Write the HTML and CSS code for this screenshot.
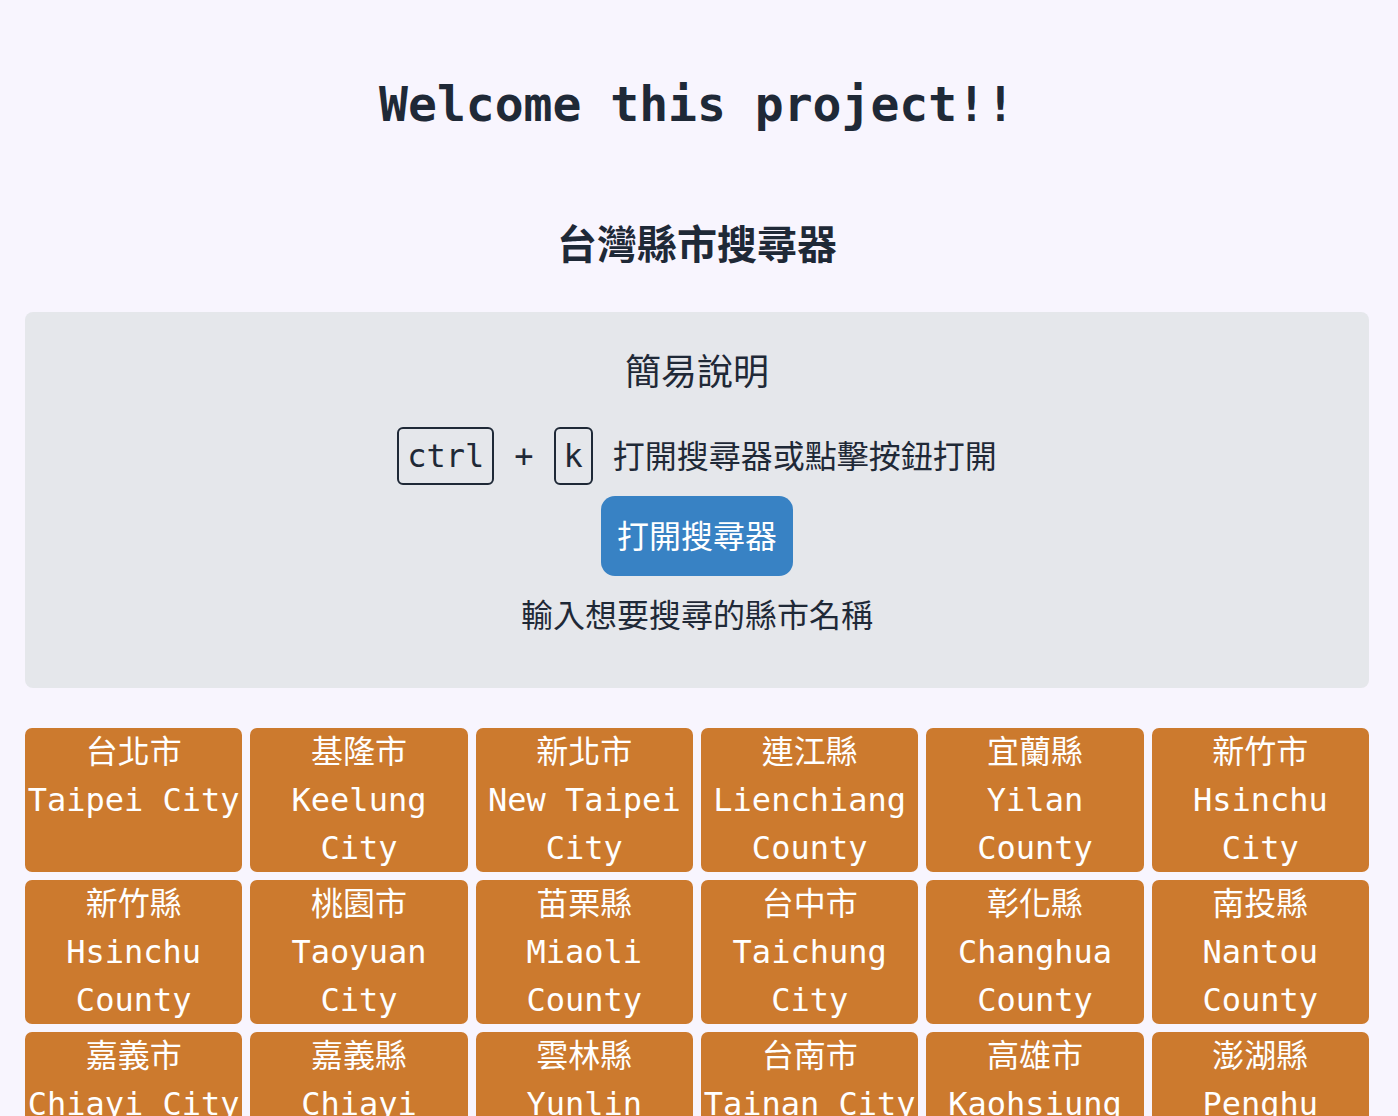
FILE: index.html
```html
<!DOCTYPE html>
<html lang="zh-Hant">
<head>
<meta charset="utf-8">
<title>台灣縣市搜尋器</title>
<link rel="stylesheet" href="styles.css">
</head>
<body>
<main class="page">
  <h1 class="title">Welcome this project!!</h1>
  <h2 class="subtitle">台灣縣市搜尋器</h2>
  <section class="guide">
    <h3 class="guide-title">簡易說明</h3>
    <div class="shortcut">
      <kbd class="key">ctrl</kbd>
      <span class="plus">+</span>
      <kbd class="key">k</kbd>
      <span class="shortcut-text">打開搜尋器或點擊按鈕打開</span>
    </div>
    <button class="open-btn" type="button">打開搜尋器</button>
    <p class="hint">輸入想要搜尋的縣市名稱</p>
  </section>
  <section class="grid">
    <div class="card"><span>台北市</span><span>Taipei City</span></div>
    <div class="card"><span>基隆市</span><span>Keelung City</span></div>
    <div class="card"><span>新北市</span><span>New Taipei City</span></div>
    <div class="card"><span>連江縣</span><span>Lienchiang County</span></div>
    <div class="card"><span>宜蘭縣</span><span>Yilan County</span></div>
    <div class="card"><span>新竹市</span><span>Hsinchu City</span></div>
    <div class="card"><span>新竹縣</span><span>Hsinchu County</span></div>
    <div class="card"><span>桃園市</span><span>Taoyuan City</span></div>
    <div class="card"><span>苗栗縣</span><span>Miaoli County</span></div>
    <div class="card"><span>台中市</span><span>Taichung City</span></div>
    <div class="card"><span>彰化縣</span><span>Changhua County</span></div>
    <div class="card"><span>南投縣</span><span>Nantou County</span></div>
    <div class="card"><span>嘉義市</span><span>Chiayi City</span></div>
    <div class="card"><span>嘉義縣</span><span>Chiayi County</span></div>
    <div class="card"><span>雲林縣</span><span>Yunlin County</span></div>
    <div class="card"><span>台南市</span><span>Tainan City</span></div>
    <div class="card"><span>高雄市</span><span>Kaohsiung City</span></div>
    <div class="card"><span>澎湖縣</span><span>Penghu County</span></div>
    <div class="card"><span>金門縣</span><span>Kinmen County</span></div>
    <div class="card"><span>屏東縣</span><span>Pingtung County</span></div>
    <div class="card"><span>台東縣</span><span>Taitung County</span></div>
    <div class="card"><span>花蓮縣</span><span>Hualien County</span></div>
  </section>
</main>
</body>
</html>
```

FILE: styles.css
```css
* { box-sizing: border-box; }

html, body {
  margin: 0;
  padding: 0;
  background: #f8f5fe;
}

body {
  font-family: "DejaVu Sans Mono", "Noto Sans CJK TC", monospace;
  color: #1f2937;
}

.page {
  padding: 0 29px 40px 25px;
  display: flex;
  flex-direction: column;
  align-items: stretch;
}

.title {
  margin: 75px 0 0;
  font-size: 48px;
  line-height: 58px;
  font-weight: 700;
  text-align: center;
}

.subtitle {
  margin: 85px 0 0;
  font-family: "Noto Sans CJK TC", sans-serif;
  font-size: 40px;
  line-height: 48px;
  font-weight: 700;
  text-align: center;
}

.guide {
  margin-top: 46px;
  background: #e5e7eb;
  border-radius: 8px;
  padding: 30px 16px 51px;
  display: flex;
  flex-direction: column;
  align-items: center;
}

.guide-title {
  margin: 0;
  font-family: "Noto Sans CJK TC", sans-serif;
  font-size: 36px;
  line-height: 54px;
  font-weight: 400;
}

.shortcut {
  margin-top: 31px;
  display: flex;
  align-items: center;
  height: 58px;
}

.key {
  font-family: "DejaVu Sans Mono", monospace;
  font-size: 32px;
  line-height: 54px;
  height: 58px;
  padding: 0 8px;
  border: 2px solid #1f2937;
  border-radius: 6px;
  display: inline-block;
}

.plus {
  font-size: 32px;
  margin: 0 20px;
}

.shortcut-text {
  margin-left: 20px;
  padding-bottom: 4px;
  font-family: "Noto Sans CJK TC", sans-serif;
  font-size: 32px;
  line-height: 48px;
}

.open-btn {
  margin-top: 11px;
  height: 80px;
  padding: 0 16px 4px;
  border: none;
  border-radius: 14px;
  background: #3882c4;
  color: #ffffff;
  font-family: "Noto Sans CJK TC", sans-serif;
  font-size: 32px;
  font-weight: 400;
  line-height: 76px;
  cursor: pointer;
}

.hint {
  margin: 13px 0 0;
  font-family: "Noto Sans CJK TC", sans-serif;
  font-size: 32px;
  line-height: 48px;
}

.grid {
  margin-top: 40px;
  display: grid;
  grid-template-columns: repeat(6, 1fr);
  gap: 8px;
}

.card {
  background: #cc7a2e;
  color: #ffffff;
  border-radius: 7px;
  min-height: 144px;
  font-size: 32px;
  line-height: 48px;
  text-align: center;
  display: flex;
  flex-direction: column;
  align-items: center;
}
```
